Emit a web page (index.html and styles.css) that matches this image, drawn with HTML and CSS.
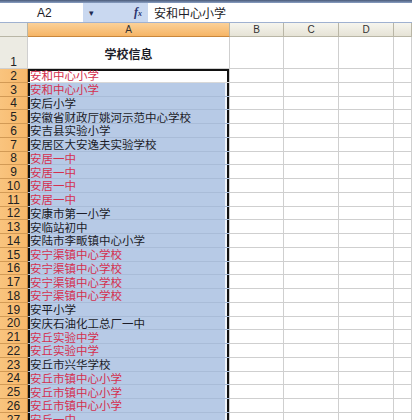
FILE: index.html
```html
<!DOCTYPE html>
<html>
<head>
    <meta charset="utf-8">
    <link rel="stylesheet" href="styles.css">
</head>
<body>
    <div class="toolbar"></div>
    <div class="formula-bar">
        <div class="name-box">A2</div>
        <div class="name-drop">&#9662;</div>
        <div class="fx"><i>f</i><small>x</small></div>
        <div class="formula">安和中心小学</div>
    </div>
    <table class="sheet">
        <colgroup>
            <col class="c-head">
            <col class="c-a">
            <col class="c-b">
            <col class="c-c">
            <col class="c-d">
            <col>
        </colgroup>
        <tr class="col-heads">
            <th class="corner"></th>
            <th class="on">A</th>
            <th>B</th>
            <th>C</th>
            <th>D</th>
            <th></th>
        </tr>
        <tr class="title-row">
            <th class="rh">1</th>
            <td class="title">学校信息</td>
            <td></td><td></td><td></td><td></td>
        </tr>
        <tr><th class="rh on">2</th><td class="sel first red">安和中心小学</td><td></td><td></td><td></td><td></td></tr>
        <tr><th class="rh on">3</th><td class="sel red">安和中心小学</td><td></td><td></td><td></td><td></td></tr>
        <tr><th class="rh on">4</th><td class="sel">安后小学</td><td></td><td></td><td></td><td></td></tr>
        <tr><th class="rh on">5</th><td class="sel">安徽省财政厅姚河示范中心学校</td><td></td><td></td><td></td><td></td></tr>
        <tr><th class="rh on">6</th><td class="sel">安吉县实验小学</td><td></td><td></td><td></td><td></td></tr>
        <tr><th class="rh on">7</th><td class="sel">安居区大安逸夫实验学校</td><td></td><td></td><td></td><td></td></tr>
        <tr><th class="rh on">8</th><td class="sel red">安居一中</td><td></td><td></td><td></td><td></td></tr>
        <tr><th class="rh on">9</th><td class="sel red">安居一中</td><td></td><td></td><td></td><td></td></tr>
        <tr><th class="rh on">10</th><td class="sel red">安居一中</td><td></td><td></td><td></td><td></td></tr>
        <tr><th class="rh on">11</th><td class="sel red">安居一中</td><td></td><td></td><td></td><td></td></tr>
        <tr><th class="rh on">12</th><td class="sel">安康市第一小学</td><td></td><td></td><td></td><td></td></tr>
        <tr><th class="rh on">13</th><td class="sel">安临站初中</td><td></td><td></td><td></td><td></td></tr>
        <tr><th class="rh on">14</th><td class="sel">安陆市李畈镇中心小学</td><td></td><td></td><td></td><td></td></tr>
        <tr><th class="rh on">15</th><td class="sel red">安宁渠镇中心学校</td><td></td><td></td><td></td><td></td></tr>
        <tr><th class="rh on">16</th><td class="sel red">安宁渠镇中心学校</td><td></td><td></td><td></td><td></td></tr>
        <tr><th class="rh on">17</th><td class="sel red">安宁渠镇中心学校</td><td></td><td></td><td></td><td></td></tr>
        <tr><th class="rh on">18</th><td class="sel red">安宁渠镇中心学校</td><td></td><td></td><td></td><td></td></tr>
        <tr><th class="rh on">19</th><td class="sel">安平小学</td><td></td><td></td><td></td><td></td></tr>
        <tr><th class="rh on">20</th><td class="sel">安庆石油化工总厂一中</td><td></td><td></td><td></td><td></td></tr>
        <tr><th class="rh on">21</th><td class="sel red">安丘实验中学</td><td></td><td></td><td></td><td></td></tr>
        <tr><th class="rh on">22</th><td class="sel red">安丘实验中学</td><td></td><td></td><td></td><td></td></tr>
        <tr><th class="rh on">23</th><td class="sel">安丘市兴华学校</td><td></td><td></td><td></td><td></td></tr>
        <tr><th class="rh on">24</th><td class="sel red">安丘市镇中心小学</td><td></td><td></td><td></td><td></td></tr>
        <tr><th class="rh on">25</th><td class="sel red">安丘市镇中心小学</td><td></td><td></td><td></td><td></td></tr>
        <tr><th class="rh on">26</th><td class="sel red">安丘市镇中心小学</td><td></td><td></td><td></td><td></td></tr>
        <tr><th class="rh on">27</th><td class="sel red">安丘一中</td><td></td><td></td><td></td><td></td></tr>
    </table>
</body>
</html>
```

FILE: styles.css
```css
/* Planilha: barra de fórmulas + grade */
body {
    margin: 0;
    width: 412px;
    height: 420px;
    overflow: hidden;
    background-color: #fff;
    font-family: "Liberation Sans", "Noto Sans CJK SC", sans-serif;
    color: #1c1c28;
}

.toolbar {
    height: 3px;
    background: linear-gradient(#4a5a78, #8aa0c4);
}

.formula-bar {
    display: flex;
    height: 20px;
    background-color: #c9d8f0;
    border-bottom: 1px solid #9fb1d0;
    box-sizing: border-box;
}

.name-box {
    width: 83px;
    background-color: #fff;
    font-size: 12px;
    line-height: 20px;
    padding-left: 37px;
    box-sizing: border-box;
}

.name-drop {
    width: 51px;
    font-size: 9px;
    line-height: 20px;
    padding-left: 6px;
    box-sizing: border-box;
    color: #1e2a50;
}

.fx {
    width: 14px;
    font-family: "Liberation Serif", serif;
    font-size: 12px;
    line-height: 19px;
    color: #2b3570;
    font-weight: bold;
}

.fx small {
    font-size: 8px;
    font-style: italic;
}

.formula {
    flex: 1;
    background-color: #fff;
    font-family: "Noto Sans CJK SC", sans-serif;
    font-size: 12px;
    line-height: 20px;
    padding-left: 6px;
}

.sheet {
    border-collapse: separate;
    border-spacing: 0;
    table-layout: fixed;
    width: 412px;
}

.c-head { width: 28px; }
.c-a { width: 202px; }
.c-b { width: 54px; }
.c-c { width: 55px; }
.c-d { width: 55px; }

.sheet td,
.sheet th {
    padding: 0;
    border-right: 1px solid #cfcfcf;
    border-bottom: 1px solid #cfcfcf;
    box-sizing: border-box;
    white-space: nowrap;
}

.sheet tr {
    height: 13.75px;
}

.sheet .col-heads {
    height: 14px;
}

.col-heads th {
    font-weight: normal;
    font-size: 10px;
    line-height: 13px;
    background: linear-gradient(#f6f5ee, #e6e3d6);
    border-right: 1px solid #b9b6a6;
    border-bottom: 1px solid #b9b6a6;
    color: #333;
}

.col-heads th.on {
    background: linear-gradient(#fbd199, #f6b566);
    border-bottom: 1px solid #c9873c;
}

.col-heads .corner {
    background: #ecebe3;
}

.rh {
    font-weight: normal;
    font-size: 12px;
    line-height: 12px;
    background-color: #ecebe3;
    border-right: 1px solid #b9b6a6;
    border-bottom: 1px solid #c8c5b5;
    color: #222;
}

.rh.on {
    background: linear-gradient(90deg, #f9c47e, #f7b86b);
    border-right: 1px solid #c9873c;
    border-bottom: 1px solid #d29a55;
}

.sheet .title-row {
    height: 32px;
}

.rh,
.title {
    vertical-align: bottom;
}

.title {
    text-align: center;
    padding-bottom: 7px !important;
    font-family: "Noto Sans CJK SC", sans-serif;
    font-size: 12px;
    line-height: 14px;
    font-weight: bold;
}

/* Faixa selecionada A2:A27 */
.sel {
    font-family: "Noto Sans CJK SC", sans-serif;
    font-size: 11.5px;
    line-height: 12px;
    padding-left: 2px !important;
    background-color: #b7cae6;
    border-bottom: 1px solid #a9bcd8 !important;
    box-shadow: inset 2px 0 #111, inset -2px 0 #111, inset -4px 0 #eef2f8;
}

.sel.first {
    background-color: #fff;
    border-bottom: 1px solid #d8d8d8 !important;
    box-shadow: inset 2px 0 #111, inset -2px 0 #111, inset 0 2px #111;
}

.red {
    color: #d4304f;
}
```
